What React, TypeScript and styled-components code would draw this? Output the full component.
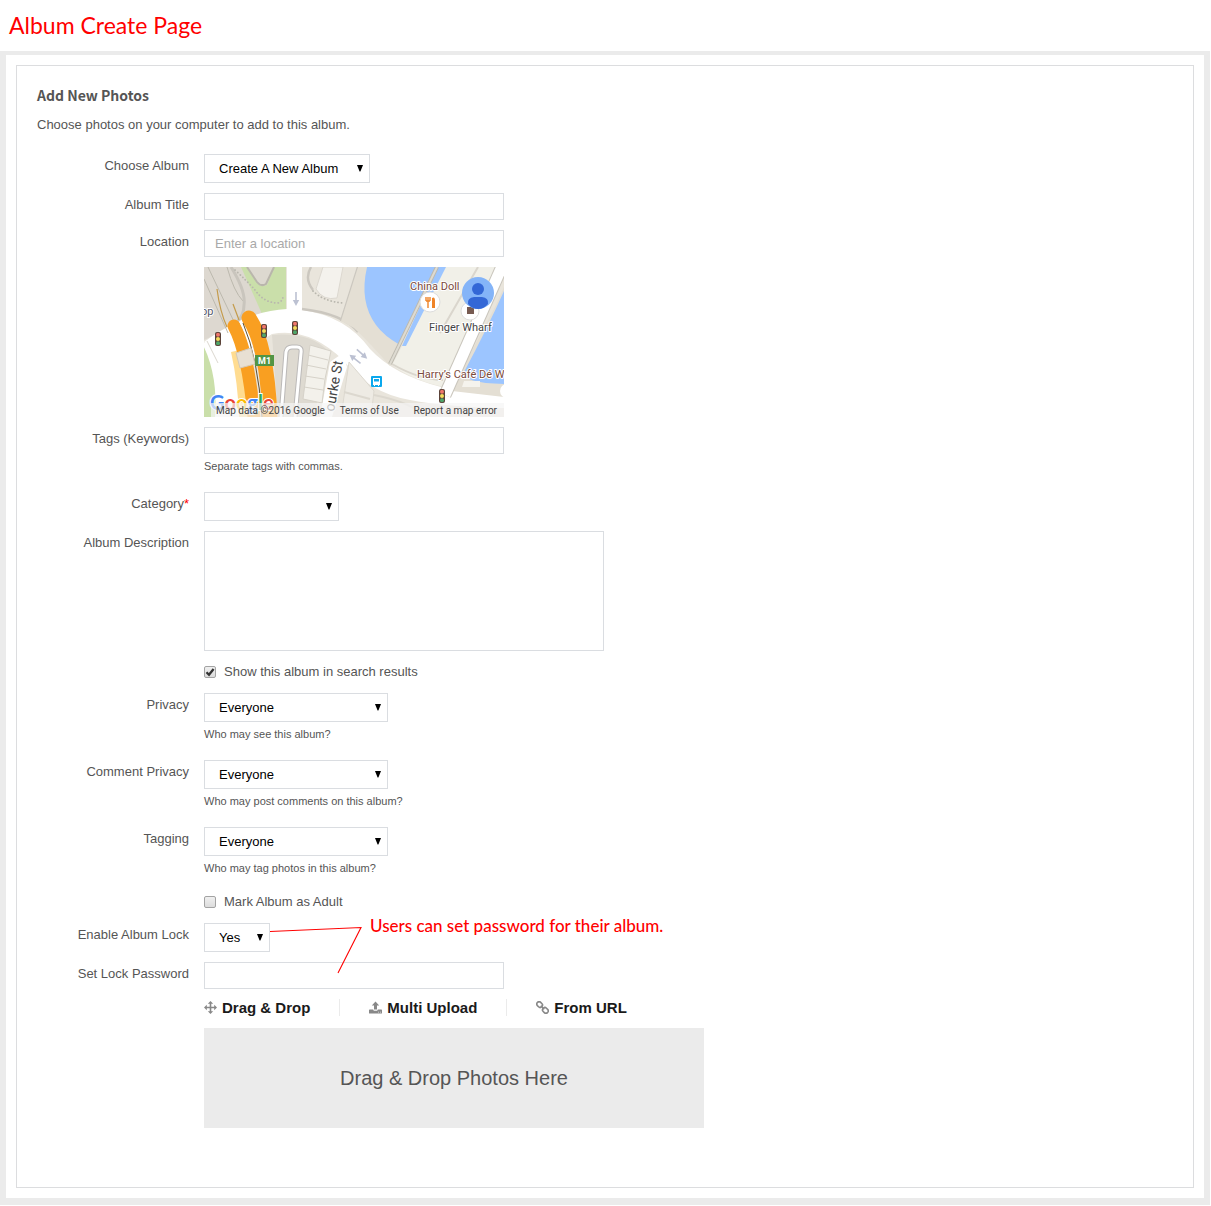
import React from "react";
import styled, { createGlobalStyle } from "styled-components";

const GlobalStyle = createGlobalStyle`
  * { box-sizing: border-box; }
  body {
    margin: 0;
    background: #fff;
    color: #555;
    font: 13px/19px "Liberation Sans", Arial, sans-serif;
  }
`;

const gothic = `"Century Gothic", Lato, sans-serif`;

const PageTitle = styled.h1`
  margin: 0;
  padding: 10px 9px 11px;
  color: #f00;
  font: 400 23px/30px ${gothic};
`;

const Frame = styled.main`
  margin-right: 1px;
  padding: 4px 6px 7px;
  background: #ebebeb;
`;

const Sheet = styled.div`
  padding: 10px;
  background: #fff;
`;

const Form = styled.form`
  padding: 19px 20px 59px;
  border: 1px solid #dcdddf;
`;

const Heading = styled.h2`
  margin: 0;
  color: #555;
  font: 700 14px/20px "Source Sans Pro", "Noto Sans CJK SC", "Noto Sans", sans-serif;
`;

const Intro = styled.p`
  margin: 10px 0 20px;
`;

const Rows = styled.div`
  display: flex;
  flex-direction: column;
  gap: 10px;
`;

const Row = styled.div`
  display: grid;
  grid-template-columns: 152px minmax(0, 1fr);
  column-gap: 15px;
`;

const Label = styled.label`
  padding-top: 2px;
  text-align: right;
`;

const Required = styled.span`
  color: #f00;
`;

const Field = styled.div`
  position: relative;
  grid-column: 2;
`;

const TextInput = styled.input`
  display: block;
  width: 300px;
  max-width: 100%;
  height: 27px;
  padding: 0 10px;
  border: 1px solid #dadde1;
  background: #fff;
  color: #555;
  font: inherit;
  outline: none;
  &::placeholder { color: #a9a9a9; opacity: 1; }
`;

const TextArea = styled.textarea`
  display: block;
  width: 400px;
  max-width: 100%;
  height: 120px;
  margin-bottom: 3px;
  border: 1px solid #dadde1;
  font: inherit;
  resize: none;
  outline: none;
`;

const SelectBox = styled.div<{ $width: number }>`
  display: grid;
  align-items: center;
  width: ${(p) => p.$width}px;
  height: 29px;
  & > * { grid-area: 1 / 1; }
  & > svg { justify-self: end; margin-right: 7px; pointer-events: none; }
`;

const Select = styled.select`
  appearance: none;
  width: 100%;
  height: 100%;
  padding: 0 14px;
  border: 1px solid #dadde1;
  border-radius: 0;
  background: #fff;
  color: #000;
  font: inherit;
  outline: none;
`;

const Hint = styled.p`
  margin: 0;
  padding: 5px 0 8px;
  font-size: 11px;
  line-height: 15px;
`;

const CheckLabel = styled.label`
  display: flex;
  align-items: center;
  gap: 8px;
  height: 19px;
  padding-bottom: 4px;
`;

const CheckMark = styled.span`
  display: grid;
  place-items: center;
  width: 12px;
  height: 12px;
  & > * { grid-area: 1 / 1; pointer-events: none; }
  & > input { pointer-events: auto; }
`;

const Checkbox = styled.input`
  appearance: none;
  width: 12px;
  height: 12px;
  margin: 0;
  border: 1px solid #a3a3a3;
  border-radius: 2px;
  background: linear-gradient(#f0f0f0, #dcdcdc);
  & + svg { visibility: hidden; }
  &:checked + svg { visibility: visible; }
`;

const MapBox = styled.div`
  position: relative;
  width: 300px;
  height: 150px;
  overflow: hidden;
  & > svg { display: block; }
`;

const MapFooter = styled.div`
  position: absolute;
  right: 0;
  bottom: 0;
  left: 7px;
  display: flex;
  justify-content: space-between;
  padding: 1px 7px 0 5px;
  background: rgba(245, 245, 245, 0.7);
  color: #444;
  font: 10px/13px Roboto, sans-serif;
  white-space: nowrap;
  & a { color: inherit; text-decoration: none; }
`;

const Callout = styled.div`
  position: absolute;
  z-index: 1;
  top: -10px;
  left: 66px;
  display: flex;
  align-items: flex-start;
  gap: 8px;
  color: #f00;
  font: 500 17px/26px ${gothic};
  white-space: nowrap;
  pointer-events: none;
`;

const Tabs = styled.div`
  display: flex;
  align-items: flex-start;
  height: 19px;
`;

const Tab = styled.button`
  display: flex;
  align-items: center;
  gap: 5px;
  height: 17px;
  padding: 0 29px;
  border: 0;
  border-left: 1px solid #ebebeb;
  background: none;
  color: #1a1a1a;
  font: 700 15px/17px "Liberation Sans", Arial, sans-serif;
  white-space: nowrap;
  & svg { flex: none; }
  &:first-child { padding-left: 0; border-left: 0; }
`;

const DropZone = styled.div`
  display: grid;
  place-items: center;
  width: 500px;
  max-width: 100%;
  height: 100px;
  background: #ebebeb;
  font-size: 20px;
`;

type FieldProps = { id: string; label: React.ReactNode; hint?: string; children: React.ReactNode };

function FormRow({ id, label, hint, children }: FieldProps) {
  return (
    <Row>
      <Label htmlFor={id}>{label}</Label>
      <Field>
        {children}
        {hint && <Hint>{hint}</Hint>}
      </Field>
    </Row>
  );
}

function DropDown({ id, width, options }: { id: string; width: number; options: string[] }) {
  return (
    <SelectBox $width={width}>
      <Select id={id}>
        {options.map((o) => <option key={o}>{o}</option>)}
      </Select>
      <svg width="6" height="7" viewBox="0 0 6 7"><path d="M0 0h6L3.4 6.5h-.8z" /></svg>
    </SelectBox>
  );
}

function CheckRow({ text, checked }: { text: string; checked?: boolean }) {
  return (
    <Row>
      <Field>
        <CheckLabel>
          <CheckMark>
            <Checkbox type="checkbox" defaultChecked={checked} />
            <svg width="10" height="10" viewBox="0 0 10 10">
              <path d="M1.5 5.2 4 7.7 8.6 2" fill="none" stroke="#333" strokeWidth="2.3" />
            </svg>
          </CheckMark>
          {text}
        </CheckLabel>
      </Field>
    </Row>
  );
}

function MoveIcon() {
  return (
    <svg width="13" height="13" viewBox="0 0 13 13" fill="#888">
      <path d="M6.5 0 9.2 2.8H7.3v2.9h2.9V3.8L13 6.5l-2.8 2.7V7.3H7.3v2.9h1.9L6.5 13 3.8 10.2h1.9V7.3H2.8v1.9L0 6.5l2.8-2.7v1.9h2.9V2.8H3.8z" />
    </svg>
  );
}

function UploadIcon() {
  return (
    <svg width="13" height="13" viewBox="0 0 13 13" fill="#888">
      <path d="M6.5 .5 10.2 4.6H8v4H5v-4H2.8z" />
      <path fillRule="evenodd" d="M.6 8.6H4.2L4.8 9.7H8.2L8.8 8.6H12.4Q13 8.6 13 9.2V11.9Q13 12.5 12.4 12.5H.6Q0 12.5 0 11.9V9.2Q0 8.6 .6 8.6zM9 10.8v.8h.8v-.8zM11 10.8v.8h.8v-.8z" />
    </svg>
  );
}

function ChainIcon() {
  return (
    <svg width="13" height="13" viewBox="0 0 13 13">
      <g transform="rotate(45 6.5 6.5)" fill="none" stroke="#888" strokeWidth="1.6">
        <rect x="-.6" y="4.2" width="6" height="4.6" rx="2.2" />
        <rect x="7.6" y="4.2" width="6" height="4.6" rx="2.2" />
        <path d="M4 6.5H9" />
      </g>
    </svg>
  );
}

function TrafficLight({ x, y }: { x: number; y: number }) {
  return (
    <g transform={`translate(${x} ${y})`}>
      <rect x="-3" y="-7" width="6" height="14" rx="2" fill="#5b4238" />
      <circle cy="-4.2" r="2" fill="#f0776c" />
      <circle r="2" fill="#f5dc5d" />
      <circle cy="4.2" r="2" fill="#4fa66a" />
    </g>
  );
}

function Arrow({ x, y, turn }: { x: number; y: number; turn: number }) {
  return (
    <path
      transform={`translate(${x} ${y}) rotate(${turn})`}
      d="M-7 -.8H1V-3.2L7 0 1 3.2V.8H-7z"
      fill="#bcc1d2"
    />
  );
}

function CityMap() {
  return (
    <MapBox>
      <svg width="300" height="150" viewBox="0 0 300 150" role="img" aria-label="Map">
        <rect width="300" height="150" fill="#e9e5dc" />
        <path d="M0 0H60V48L28 60 0 73z" fill="#ddd8d0" />
        <path d="M37 0H82V43L58 47Z" fill="#cadfaa" />
        <path d="M43 0 54 17Q58 20 63 18L70 0z" fill="#ddd9d0" />
        <path d="M43 0 53 15Q57 20 62 17L70 0" fill="none" stroke="#b9b6ac" strokeWidth="2" />
        <path d="M0 80 15 108 14 150H0z" fill="#cadfaa" />
        <path d="M0 76 28 62 40 150H11Q14 110 0 80z" fill="#fff" />
        <path d="M0 75Q42 44 83 42V0H98V43Q142 49 166 82Q190 108 237 120L300 128V141Q244 140 206 133Q165 126 139 93Q105 60 68 67L22 96z" fill="#fff" />
        <path d="M139 86 126 95 116 150H128L143 100z" fill="#fff" />
        <g fill="none" stroke="#bcb9ae">
          <path d="M0 12 24 66M4 0 33 61M23 0Q30 25 39 34" strokeWidth="1" />
          <path d="M27 0Q42 24 40 38Q40 48 33 55" strokeWidth="3" stroke="#c9c5bd" />
          <path d="M107 0Q100 12 109 23M154 0 137 54M98 42Q140 47 154 65" strokeWidth="2.4" stroke="#cbc7bf" />
          <path d="M3 74 14 96" stroke="#dcd8d0" />
        </g>
        <path d="M119 0H139L133 31Q119 34 112 22z" fill="#f4f2ed" stroke="#dcd8d0" />
        <path d="M109 24Q119 34 138 36M31 3Q43 14 51 23Q60 36 74 36 79 34 79 29" fill="none" stroke="#b9b7ae" strokeWidth="1.8" strokeDasharray=".1 3.4" strokeLinecap="round" />
        <path d="M13 22Q16 45 23 60M29 37 35 53" stroke="#c49b4b" strokeWidth="1.2" fill="none" />

        <path d="M154 0H163Q157 52 196 77L186 99Q168 78 150 61L137 54z" fill="#e4dfd4" />
        <path d="M163 0Q155 35 172 58Q180 69 196 78L232 0z" fill="#9cc5ff" />
        <path d="M240 0H292L240 120Q208 113 188 98z" fill="#f1f0e8" />
        <path d="M234 0 198 79 202 79 242 0z" fill="#9cc5ff" />
        <path d="M233 0 186 97" stroke="#bcb9ae" strokeWidth="4" />
        <path d="M233 0 186 97" stroke="#dedbd2" strokeWidth="2" />
        <path d="M274 0 236 66M188 97Q216 113 239 113" fill="none" stroke="#dad6cd" strokeWidth="2" />
        <path d="M300 20 292 38 253 112 248 124 300 130z" fill="#e4dfd4" />
        <path d="M300 24Q283 62 260 105 258 116 300 117z" fill="#9cc5ff" />
        <path d="M300 -5 241 128" stroke="#c9c5bc" strokeWidth="13" />
        <path d="M300 -5 241 128" stroke="#fff" strokeWidth="11" />
        <circle cx="303" cy="124" r="7" fill="#fff" />

        <path d="M68 68Q106 65 124 84L110 150H74z" fill="#dedad1" />
        <path d="M77 150 82 85Q83 80 88 80H93Q98 80 97 86L91 150" fill="none" stroke="#bbb9b8" strokeWidth="5" />
        <path d="M77 150 82 85Q83 80 88 80H93Q98 80 97 86L91 150" fill="none" stroke="#fff" strokeWidth="3" />
        <path d="M106 78 127 84 121 112 118 136 99 132z" fill="#f3f1eb" stroke="#d6d2c9" />
        <path d="M104 88 124 93M102 98 122 102M101 109 120 112M100 120 119 123" stroke="#d6d2c9" />
        <path d="M145 95 170 124 167 150H137z" fill="#eeebe4" stroke="#dcd8cf" />
        <path d="M170 128Q210 136 220 150M140 125 166 132" fill="none" stroke="#dcd8cf" strokeWidth="2" />
        <path d="M260 114H276V120H258z" fill="#f5f3ed" />

        <path d="M27 85 36 83 48 150H35Q34 116 27 85z" fill="#ffdc91" />
        <path d="M30 59Q44 85 50 150" fill="none" stroke="#f99f21" strokeWidth="13" strokeLinecap="round" />
        <path d="M45 51Q63 78 66 150" fill="none" stroke="#f99f21" strokeWidth="15" strokeLinecap="round" />
        <path d="M37 56Q48 75 51 94" fill="none" stroke="#fff" strokeWidth="2" />
        <path d="M39 56Q54 91 58 150" fill="none" stroke="#5f5137" strokeWidth="1" />
        <path d="M32 86 47 81 51 97 36 101z" fill="#e8e0d3" stroke="#d4c9b8" />
        <rect x="51" y="88" width="19" height="11" fill="#529544" />
        <text x="54" y="97" fill="#fff" fontFamily="Roboto, sans-serif" fontSize="9" fontWeight="700">M1</text>

        <Arrow x={92} y={32} turn={90} />
        <Arrow x={151} y={92} turn={218} />
        <Arrow x={158} y={87} turn={42} />
        <TrafficLight x={14} y={72} />
        <TrafficLight x={60} y={64} />
        <TrafficLight x={91} y={61} />
        <TrafficLight x={238} y={129} />
        <rect x="167" y="109" width="11" height="11" rx="1" fill="#0ba8ed" />
        <path d="M169 111h7v7h-1v1h-1v-1h-3v1h-1v-1h-1z" fill="#fff" />
        <path d="M170 112h5v2.5h-5z" fill="#0ba8ed" />

        <circle cx="226" cy="35" r="10" fill="#fff" stroke="#ddd" />
        <path d="M222 30v4M224 30v4M226 30v4M222 34h4M224 34v7" stroke="#ef8428" strokeWidth="1.4" />
        <path d="M228 41V31Q231 29 231 34V41" fill="#ef8428" />
        <circle cx="266" cy="44" r="9" fill="#fff" stroke="#ddd" />
        <path d="M263 40h7v7h-7z" fill="#775b52" />
        <circle cx="274" cy="26" r="16" fill="#84b4f8" />
        <circle cx="274" cy="22" r="6" fill="#3367d6" />
        <path d="M264 37Q263 31 270 30H278Q285 31 284 37 280 42 274 42 268 42 264 37z" fill="#3367d6" />

        <g fontFamily="Roboto, sans-serif" fontSize="11" stroke="#fff" strokeWidth="2" strokeLinejoin="round" paintOrder="stroke">
          <text x="-3" y="48" fill="#53576b">op</text>
          <text x="206" y="23" fill="#7b4a3c">China Doll</text>
          <text x="225" y="64" fill="#444">Finger Wharf</text>
          <text x="213" y="111" fill="#7b4a3c">Harry’s Café Dé W</text>
          <text transform="translate(130 145) rotate(-80)" fill="#444" fontSize="14">ourke St</text>
        </g>
        <text x="6" y="143" fontFamily="Lato, sans-serif" fontSize="20" fontWeight="700" stroke="#fff" strokeWidth="2" paintOrder="stroke">
          <tspan fill="#4285f4">G</tspan><tspan fill="#ea4335">o</tspan><tspan fill="#fbbc05">o</tspan>
          <tspan fill="#4285f4">g</tspan><tspan fill="#34a853">l</tspan><tspan fill="#ea4335">e</tspan>
        </text>
      </svg>
      <MapFooter>
        <span>Map data ©2016 Google</span>
        <a href="#terms">Terms of Use</a>
        <a href="#report">Report a map error</a>
      </MapFooter>
    </MapBox>
  );
}

export default function App() {
  return (
    <>
      <GlobalStyle />
      <PageTitle>Album Create Page</PageTitle>
      <Frame>
        <Sheet>
          <Form onSubmit={(e) => e.preventDefault()}>
            <Heading>Add New Photos</Heading>
            <Intro>Choose photos on your computer to add to this album.</Intro>
            <Rows>
              <FormRow id="album" label="Choose Album">
                <DropDown id="album" width={166} options={["Create A New Album"]} />
              </FormRow>
              <FormRow id="title" label="Album Title">
                <TextInput id="title" type="text" />
              </FormRow>
              <FormRow id="location" label="Location">
                <TextInput id="location" type="text" placeholder="Enter a location" />
              </FormRow>
              <Row>
                <Field><CityMap /></Field>
              </Row>
              <FormRow id="tags" label="Tags (Keywords)" hint="Separate tags with commas.">
                <TextInput id="tags" type="text" />
              </FormRow>
              <FormRow id="category" label={<>Category<Required>*</Required></>}>
                <DropDown id="category" width={135} options={[""]} />
              </FormRow>
              <FormRow id="description" label="Album Description">
                <TextArea id="description" />
              </FormRow>
              <CheckRow text="Show this album in search results" checked />
              <FormRow id="privacy" label="Privacy" hint="Who may see this album?">
                <DropDown id="privacy" width={184} options={["Everyone"]} />
              </FormRow>
              <FormRow id="comments" label="Comment Privacy" hint="Who may post comments on this album?">
                <DropDown id="comments" width={184} options={["Everyone"]} />
              </FormRow>
              <FormRow id="tagging" label="Tagging" hint="Who may tag photos in this album?">
                <DropDown id="tagging" width={184} options={["Everyone"]} />
              </FormRow>
              <CheckRow text="Mark Album as Adult" />
              <FormRow id="lock" label="Enable Album Lock">
                <DropDown id="lock" width={66} options={["Yes", "No"]} />
                <Callout>
                  <svg width="92" height="62" viewBox="0 0 92 62">
                    <path d="M0 18.5 91 14.5 68 60" fill="none" stroke="#f00" strokeWidth="1.1" />
                  </svg>
                  Users can set password for their album.
                </Callout>
              </FormRow>
              <FormRow id="password" label="Set Lock Password">
                <TextInput id="password" type="password" />
              </FormRow>
              <Row>
                <Field>
                  <Tabs>
                    <Tab type="button"><MoveIcon />Drag &amp; Drop</Tab>
                    <Tab type="button"><UploadIcon />Multi Upload</Tab>
                    <Tab type="button"><ChainIcon />From URL</Tab>
                  </Tabs>
                </Field>
              </Row>
              <Row>
                <Field><DropZone>Drag &amp; Drop Photos Here</DropZone></Field>
              </Row>
            </Rows>
          </Form>
        </Sheet>
      </Frame>
    </>
  );
}
